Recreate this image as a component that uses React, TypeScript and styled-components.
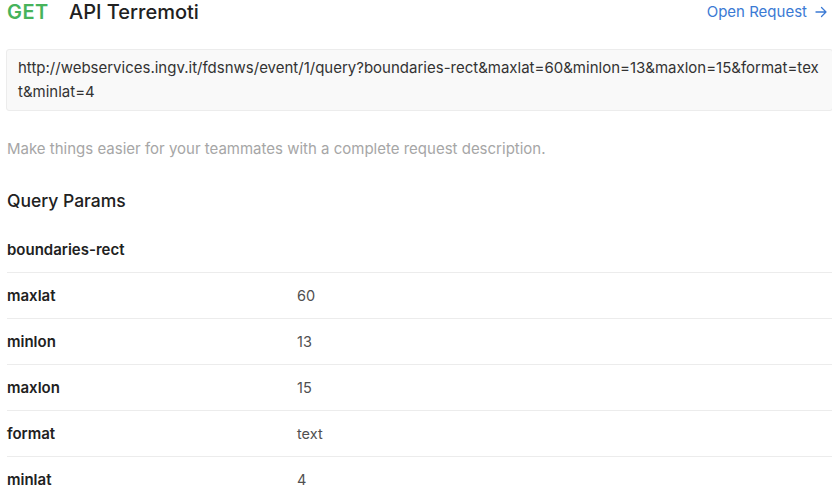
import React from "react";
import styled, { createGlobalStyle } from "styled-components";

const Global = createGlobalStyle`
  html, body { margin: 0; padding: 0; background: #ffffff; }
  body { font-family: Inter, "Noto Sans", sans-serif; overflow: hidden; }
  * { box-sizing: border-box; }
`;

const Page = styled.div`
  width: 832px;
  padding: 0 0 0 7px;
  display: flex;
  flex-direction: column;
`;

const Header = styled.div`
  display: flex;
  align-items: center;
  height: 24px;
  padding-right: 5px;
`;

const Method = styled.span`
  color: #47b35b;
  font-size: 20px;
  line-height: 24px;
  font-weight: 600;
  letter-spacing: 0.4px;
  width: 62px;
`;

const Title = styled.h1`
  margin: 0;
  font-size: 20px;
  line-height: 24px;
  font-weight: 500;
  color: #212121;
  flex: 1;
`;

const OpenLink = styled.a`
  display: flex;
  align-items: center;
  gap: 8px;
  color: #3b7ad4;
  font-size: 15px;
  line-height: 20px;
  text-decoration: none;
`;

const UrlBox = styled.div`
  margin: 25px 0 0 -1px;
  width: 827px;
  background: #f9f9f9;
  border: 1px solid #ececec;
  border-radius: 3px;
  padding: 6px 11px 6px 11px;
  font-size: 15px;
  line-height: 24px;
  color: #333333;
  word-break: break-all;
`;

const Description = styled.p`
  margin: 28px 0 0;
  font-size: 15px;
  line-height: 20px;
  color: #a6a6a6;
`;

const SectionTitle = styled.h2`
  margin: 30px 0 0;
  font-size: 17.5px;
  line-height: 24px;
  font-weight: 500;
  color: #212121;
`;

const Table = styled.div`
  margin-top: 14px;
  display: flex;
  flex-direction: column;
`;

const Row = styled.div<{ $first?: boolean }>`
  display: grid;
  grid-template-columns: 290px 1fr;
  align-items: center;
  height: ${(p) => (p.$first ? "45px" : "46px")};
  border-top: ${(p) => (p.$first ? "none" : "1px solid #ececec")};
  line-height: 20px;
`;

const Key = styled.span`
  font-size: 15px;
  font-weight: 600;
  color: #212121;
`;

const Value = styled.span`
  font-size: 14.5px;
  color: #505050;
`;

const params: [string, string][] = [
  ["boundaries-rect", ""],
  ["maxlat", "60"],
  ["minlon", "13"],
  ["maxlon", "15"],
  ["format", "text"],
  ["minlat", "4"],
];

export default function App() {
  return (
    <>
      <Global />
      <Page>
        <Header>
          <Method>GET</Method>
          <Title>API Terremoti</Title>
          <OpenLink href="#">
            Open Request
            <svg width="12" height="12" viewBox="0 0 12 12" fill="none" stroke="currentColor" strokeWidth="1.3" strokeLinecap="round" strokeLinejoin="round">
              <path d="M1 6h10M6.5 1.5 11 6l-4.5 4.5" />
            </svg>
          </OpenLink>
        </Header>
        <UrlBox>
          http://webservices.ingv.it/fdsnws/event/1/query?boundaries-rect&amp;maxlat=60&amp;minlon=13&amp;maxlon=15&amp;format=text&amp;minlat=4
        </UrlBox>
        <Description>Make things easier for your teammates with a complete request description.</Description>
        <SectionTitle>Query Params</SectionTitle>
        <Table>
          {params.map(([k, v], i) => (
            <Row key={k} $first={i === 0}>
              <Key>{k}</Key>
              <Value>{v}</Value>
            </Row>
          ))}
        </Table>
      </Page>
    </>
  );
}
